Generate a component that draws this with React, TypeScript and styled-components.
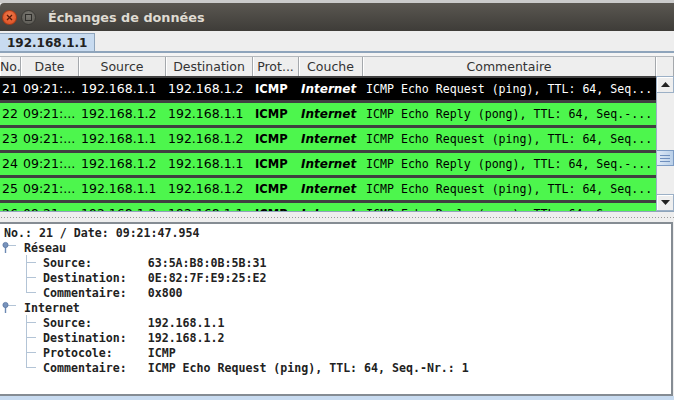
import styled, { createGlobalStyle } from "styled-components";

/* ── Global ──────────────────────────────────────────── */

const Global = createGlobalStyle`
  html, body { margin: 0; padding: 0; background: #eeeeee; }
  body { width: 674px; height: 400px; overflow: hidden; }
  * { box-sizing: border-box; }
`;

const SANS = `"DejaVu Sans", "Liberation Sans", sans-serif`;
const MONO = `"DejaVu Sans Mono", "Liberation Mono", monospace`;

/* ── Window chrome ───────────────────────────────────── */

const Window = styled.div`
  width: 674px;
  height: 400px;
  display: flex;
  flex-direction: column;
  background: #eeeeee;
  overflow: hidden;
`;

const Desktop = styled.div`
  height: 3px;
  background: #cbcbcb;
  flex: none;
`;

const TitleBar = styled.div`
  height: 28px;
  flex: none;
  display: flex;
  align-items: center;
  gap: 4px;
  padding-left: 2px;
  padding-top: 1px;
  background: linear-gradient(#5a5751, #3e3c38);
  border-top-left-radius: 4px;
`;

const WinButton = styled.div<{ $close?: boolean }>`
  width: 15px;
  height: 15px;
  border-radius: 50%;
  display: flex;
  align-items: center;
  justify-content: center;
  background: ${(p) =>
    p.$close
      ? "radial-gradient(circle at 50% 35%, #f07a4c, #d94a1e)"
      : "radial-gradient(circle at 50% 35%, #7a7872, #57554f)"};
  border: 1px solid ${(p) => (p.$close ? "#a83a16" : "#3a3935")};
`;

const Title = styled.span`
  margin-left: 8px;
  font-family: ${SANS};
  font-weight: bold;
  font-size: 12.8px;
  color: #dfdbd2;
`;

/* ── Tabs ────────────────────────────────────────────── */

const TabStrip = styled.div`
  height: 22px;
  flex: none;
  display: flex;
  align-items: flex-end;
  border-bottom: 2px solid #8ea4bb;
`;

const Tab = styled.div`
  width: 95px;
  height: 18px;
  padding-left: 7px;
  display: flex;
  align-items: center;
  background: #c8dbf0;
  border-top: 1px solid #8ea4bb;
  border-right: 1px solid #8ea4bb;
  font-family: ${SANS};
  font-weight: bold;
  font-size: 12px;
  color: #222;
`;

/* ── Table ───────────────────────────────────────────── */

const COLS = "21px 58px 87px 87px 46px 64px 293px";

const TableArea = styled.div`
  flex: none;
  padding-top: 3px;
  background: #f4f4f4;
`;

const HeaderRow = styled.div`
  display: grid;
  grid-template-columns: ${COLS} 18px;
  height: 20px;
  border-top: 1px solid #b4b8bc;
`;

const HeaderCell = styled.div<{ $left?: boolean }>`
  display: flex;
  align-items: center;
  justify-content: ${(p) => (p.$left ? "flex-start" : "center")};
  overflow: hidden;
  white-space: nowrap;
  background: #eeeeee;
  border-right: 1px solid #a4a8ac;
  box-shadow: inset 1px 0 0 #ffffff;
  font-family: ${SANS};
  font-size: 12.5px;
  color: #333;
`;

const BodyWrap = styled.div`
  display: flex;
  height: 135px;
`;

const Rows = styled.div`
  width: 656px;
  display: flex;
  flex-direction: column;
  gap: 3px;
  padding-top: 2px;
  background: #404040;
  overflow: hidden;
`;

const Row = styled.div<{ $selected?: boolean }>`
  flex: none;
  display: grid;
  grid-template-columns: ${COLS};
  height: 22px;
  background: ${(p) => (p.$selected ? "#000000" : "#4df64d")};
  color: ${(p) => (p.$selected ? "#ffffff" : "#000000")};
`;

const Cell = styled.div<{ $kind?: "proto" | "layer" | "comment" }>`
  padding-left: ${(p) => (p.$kind === "comment" ? 3 : 2)}px;
  line-height: 22px;
  white-space: nowrap;
  overflow: hidden;
  font-family: ${(p) => (p.$kind === "comment" ? MONO : SANS)};
  font-size: ${(p) =>
    p.$kind === "comment" ? "11.6px" : p.$kind === "proto" ? "11.5px" : p.$kind === "layer" ? "12px" : "12.5px"};
  font-weight: ${(p) => (p.$kind === "proto" || p.$kind === "layer" ? "bold" : "normal")};
  font-style: ${(p) => (p.$kind === "layer" ? "italic" : "normal")};
`;

/* ── Scrollbar ───────────────────────────────────────── */

const ScrollBar = styled.div`
  width: 18px;
  display: flex;
  flex-direction: column;
  background: #eeeeee;
  border-left: 1px solid #9cb0c6;
`;

const ScrollBtn = styled.div`
  height: 17px;
  flex: none;
  display: flex;
  align-items: center;
  justify-content: center;
  background: #eeeeee;
  border: 1px solid #9cb0c6;
  border-left: none;
  box-shadow: inset 1px 1px 0 #ffffff;
`;

const Track = styled.div`
  flex: 1;
  position: relative;
`;

const Thumb = styled.div`
  position: absolute;
  left: 0;
  right: 0;
  height: 16px;
  display: flex;
  flex-direction: column;
  align-items: center;
  justify-content: center;
  gap: 2px;
  background: linear-gradient(90deg, #dfeaf7, #b9cfe8);
  border: 1px solid #7d9cc4;
  border-left: none;
`;

const Grip = styled.span`
  width: 10px;
  height: 1px;
  background: #6f8fbd;
`;

/* ── Splitter ────────────────────────────────────────── */

const Splitter = styled.div`
  height: 11px;
  flex: none;
  display: flex;
  align-items: center;
  border-top: 1px solid #8ea4bb;
  background: #eeeeee;
`;

const Dots = styled.div`
  width: 100%;
  height: 3px;
  background-image: radial-gradient(circle, #9a9a9a 0.7px, transparent 1px);
  background-size: 3px 3px;
`;

/* ── Detail tree ─────────────────────────────────────── */

const Detail = styled.div`
  height: 174px;
  flex: none;
  background: #ffffff;
  border-top: 2px solid #858c93;
  border-right: 2px solid #858c93;
  border-bottom: 2px solid #858c93;
  margin-right: 1px;
  padding-top: 1px;
  font-family: ${MONO};
  font-weight: bold;
  font-size: 11.6px;
  color: #222;
`;

const Line = styled.div<{ $indent?: number }>`
  height: 15px;
  display: flex;
  align-items: center;
  padding-left: ${(p) => p.$indent ?? 0}px;
  white-space: pre;
`;

const Handle = styled.svg`
  width: 24px;
  height: 15px;
  flex: none;
`;

const Connector = styled.div<{ $last?: boolean }>`
  width: 43px;
  height: 15px;
  flex: none;
  position: relative;
  &::before {
    content: "";
    position: absolute;
    left: 26px;
    top: 0;
    width: 1px;
    height: ${(p) => (p.$last ? "8px" : "15px")};
    background: #b3c4d6;
  }
  &::after {
    content: "";
    position: absolute;
    left: 26px;
    top: 7px;
    width: 10px;
    height: 1px;
    background: #b3c4d6;
  }
`;

const BottomStrip = styled.div`
  flex: 1;
  background: #c8dbf0;
`;

/* ── Data ────────────────────────────────────────────── */

interface Packet {
  no: string;
  src: string;
  dst: string;
  comment: string;
}

const REQ = "ICMP Echo Request (ping), TTL: 64, Seq...";
const REP = "ICMP Echo Reply (pong), TTL: 64, Seq.-...";

const PACKETS: Packet[] = [
  { no: "21", src: "192.168.1.1", dst: "192.168.1.2", comment: REQ },
  { no: "22", src: "192.168.1.2", dst: "192.168.1.1", comment: REP },
  { no: "23", src: "192.168.1.1", dst: "192.168.1.2", comment: REQ },
  { no: "24", src: "192.168.1.2", dst: "192.168.1.1", comment: REP },
  { no: "25", src: "192.168.1.1", dst: "192.168.1.2", comment: REQ },
  { no: "26", src: "192.168.1.2", dst: "192.168.1.1", comment: REP },
];

const HEADERS = ["No.", "Date", "Source", "Destination", "Prot...", "Couche", "Commentaire", ""];

const TREE = [
  {
    label: "Réseau",
    fields: [
      ["Source:", "63:5A:B8:0B:5B:31"],
      ["Destination:", "0E:82:7F:E9:25:E2"],
      ["Commentaire:", "0x800"],
    ],
  },
  {
    label: "Internet",
    fields: [
      ["Source:", "192.168.1.1"],
      ["Destination:", "192.168.1.2"],
      ["Protocole:", "ICMP"],
      ["Commentaire:", "ICMP Echo Request (ping), TTL: 64, Seq.-Nr.: 1"],
    ],
  },
];

function NodeHandle() {
  return (
    <Handle viewBox="0 0 24 15">
      <line x1="8" y1="5.5" x2="16" y2="5.5" stroke="#b3c4d6" />
      <line x1="5.5" y1="6" x2="5.5" y2="13" stroke="#6d89b3" strokeWidth="1.4" />
      <circle cx="5.5" cy="5" r="2.6" fill="#7893bb" stroke="#5a77a3" strokeWidth="0.8" />
    </Handle>
  );
}

/* ── Page ────────────────────────────────────────────── */

export default function App() {
  return (
    <Window>
      <Global />
      <Desktop />
      <TitleBar>
        <WinButton $close>
          <svg width="7" height="7" viewBox="0 0 7 7">
            <path d="M1 1L6 6M6 1L1 6" stroke="#5a1a08" strokeWidth="1.3" />
          </svg>
        </WinButton>
        <WinButton>
          <svg width="7" height="7" viewBox="0 0 7 7">
            <rect x="0.5" y="0.5" width="6" height="6" fill="none" stroke="#2e2d2a" strokeWidth="1" />
          </svg>
        </WinButton>
        <Title>Échanges de données</Title>
      </TitleBar>

      <TabStrip>
        <Tab>192.168.1.1</Tab>
      </TabStrip>

      <TableArea>
        <HeaderRow>
          {HEADERS.map((h, i) => (
            <HeaderCell key={i} $left={i === 0}>
              {h}
            </HeaderCell>
          ))}
        </HeaderRow>
        <BodyWrap>
          <Rows>
            {PACKETS.map((p, i) => (
              <Row key={p.no} $selected={i === 0}>
                <Cell>{p.no}</Cell>
                <Cell>09:21:...</Cell>
                <Cell>{p.src}</Cell>
                <Cell>{p.dst}</Cell>
                <Cell $kind="proto">ICMP</Cell>
                <Cell $kind="layer">Internet</Cell>
                <Cell $kind="comment">{p.comment}</Cell>
              </Row>
            ))}
          </Rows>
          <ScrollBar>
            <ScrollBtn>
              <svg width="9" height="5" viewBox="0 0 9 5">
                <path d="M0 5L4.5 0L9 5Z" fill="#222" />
              </svg>
            </ScrollBtn>
            <Track>
              <Thumb style={{ top: 57 }}>
                <Grip />
                <Grip />
                <Grip />
              </Thumb>
            </Track>
            <ScrollBtn>
              <svg width="9" height="5" viewBox="0 0 9 5">
                <path d="M0 0L4.5 5L9 0Z" fill="#222" />
              </svg>
            </ScrollBtn>
          </ScrollBar>
        </BodyWrap>
      </TableArea>

      <Splitter>
        <Dots />
      </Splitter>

      <Detail>
        <Line $indent={4}>No.: 21 / Date: 09:21:47.954</Line>
        {TREE.map((node) => (
          <div key={node.label}>
            <Line>
              <NodeHandle />
              {node.label}
            </Line>
            {node.fields.map(([k, v], i) => (
              <Line key={k + i}>
                <Connector $last={i === node.fields.length - 1} />
                {k.padEnd(15, " ")}
                {v}
              </Line>
            ))}
          </div>
        ))}
      </Detail>
      <BottomStrip />
    </Window>
  );
}
